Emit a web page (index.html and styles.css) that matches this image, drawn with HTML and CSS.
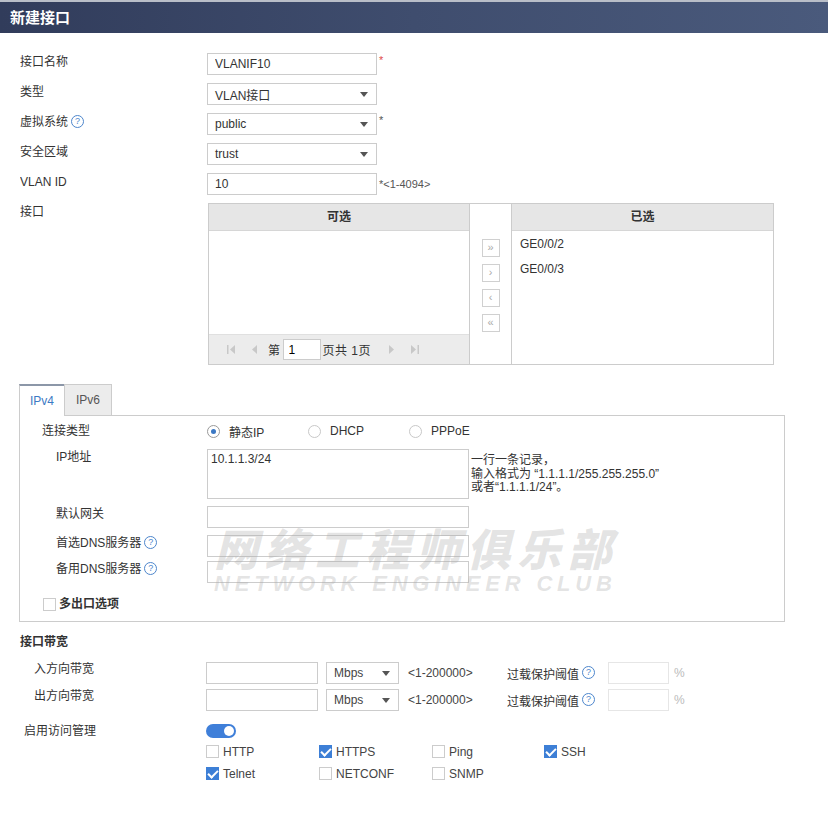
FILE: index.html
```html
<!DOCTYPE html>
<html lang="zh-CN">
<head>
  <meta charset="UTF-8" />
  <title>新建接口</title>
  <link rel="stylesheet" href="styles.css">
</head>
<body>

  <div class="titlebar">新建接口</div>

  <div class="form">
    <div class="row">
      <label class="lbl">接口名称</label>
      <input class="txt w170" type="text" value="VLANIF10" />
      <span class="req red">*</span>
    </div>
    <div class="row">
      <label class="lbl">类型</label>
      <div class="select w170">VLAN接口<span class="arrow"></span></div>
    </div>
    <div class="row">
      <label class="lbl">虚拟系统<span class="help">?</span></label>
      <div class="select w170">public<span class="arrow"></span></div>
      <span class="req">*</span>
    </div>
    <div class="row">
      <label class="lbl">安全区域</label>
      <div class="select w170">trust<span class="arrow"></span></div>
    </div>
    <div class="row">
      <label class="lbl">VLAN ID</label>
      <input class="txt w170" type="text" value="10" />
      <span class="req mid">*&lt;1-4094&gt;</span>
    </div>
    <div class="row">
      <label class="lbl">接口</label>
      <div class="duallist">
        <div class="dl-pane dl-left">
          <div class="dl-head">可选</div>
          <div class="dl-body"></div>
          <div class="pager">
            <svg class="pg-ico" width="9" height="9" viewBox="0 0 9 9"><rect x="0" y="0" width="1.5" height="9" fill="#c8c8c8"/><path d="M8 0 L3 4.5 L8 9 Z" fill="#c8c8c8"/></svg>
            <svg class="pg-ico pg-prev" width="9" height="9" viewBox="0 0 9 9"><path d="M7 0 L2 4.5 L7 9 Z" fill="#c8c8c8"/></svg>
            <span class="pg-txt">第</span>
            <input class="pg-input" type="text" value="1" />
            <span class="pg-txt">页共 1页</span>
            <svg class="pg-ico pg-next" width="9" height="9" viewBox="0 0 9 9"><path d="M2 0 L7 4.5 L2 9 Z" fill="#c8c8c8"/></svg>
            <svg class="pg-ico" width="9" height="9" viewBox="0 0 9 9"><path d="M1 0 L6 4.5 L1 9 Z" fill="#c8c8c8"/><rect x="7.5" y="0" width="1.5" height="9" fill="#c8c8c8"/></svg>
          </div>
        </div>
        <div class="dl-mid">
          <span class="mv-btn">&raquo;</span>
          <span class="mv-btn">&rsaquo;</span>
          <span class="mv-btn">&lsaquo;</span>
          <span class="mv-btn">&laquo;</span>
        </div>
        <div class="dl-pane dl-right">
          <div class="dl-head">已选</div>
          <div class="dl-item">GE0/0/2</div>
          <div class="dl-item">GE0/0/3</div>
        </div>
      </div>
    </div>

    <div class="tabs">
      <span class="tab active">IPv4</span>
      <span class="tab">IPv6</span>
    </div>
    <div class="tab-panel">
      <div class="prow radios">
        <label class="lbl">连接类型</label>
        <span class="radio-opt"><span class="radio on"></span>静态IP</span>
        <span class="radio-opt"><span class="radio"></span>DHCP</span>
        <span class="radio-opt"><span class="radio"></span>PPPoE</span>
      </div>
      <div class="prow">
        <label class="lbl sub">IP地址</label>
        <textarea class="area">10.1.1.3/24</textarea>
        <div class="hint">一行一条记录，<br>输入格式为 “1.1.1.1/255.255.255.0”<br>或者“1.1.1.1/24”。</div>
      </div>
      <div class="prow">
        <label class="lbl sub">默认网关</label>
        <input class="txt w262" type="text" />
      </div>
      <div class="prow tight">
        <label class="lbl sub">首选DNS服务器<span class="help">?</span></label>
        <input class="txt w262" type="text" />
      </div>
      <div class="prow tight">
        <label class="lbl sub">备用DNS服务器<span class="help">?</span></label>
        <input class="txt w262" type="text" />
      </div>
      <div class="multi">
        <span class="cbox"></span><b>多出口选项</b>
      </div>
    </div>

    <div class="section-title">接口带宽</div>
    <div class="bw-row">
      <label class="lbl bw">入方向带宽</label>
      <input class="txt w112" type="text" />
      <div class="select w73">Mbps<span class="arrow"></span></div>
      <span class="range">&lt;1-200000&gt;</span>
      <span class="th-lbl">过载保护阈值<span class="help">?</span></span>
      <input class="txt w61 faint" type="text" />
      <span class="pct">%</span>
    </div>
    <div class="bw-row">
      <label class="lbl bw">出方向带宽</label>
      <input class="txt w112" type="text" />
      <div class="select w73">Mbps<span class="arrow"></span></div>
      <span class="range">&lt;1-200000&gt;</span>
      <span class="th-lbl">过载保护阈值<span class="help">?</span></span>
      <input class="txt w61 faint" type="text" />
      <span class="pct">%</span>
    </div>

    <div class="acc-row">
      <label class="lbl acc">启用访问管理</label>
      <div class="acc-field">
        <span class="toggle"><span class="knob"></span></span>
        <div class="svc-grid">
          <span class="svc"><span class="cbox"></span>HTTP</span>
          <span class="svc"><span class="cbox on"></span>HTTPS</span>
          <span class="svc"><span class="cbox"></span>Ping</span>
          <span class="svc"><span class="cbox on"></span>SSH</span>
          <span class="svc"><span class="cbox on"></span>Telnet</span>
          <span class="svc"><span class="cbox"></span>NETCONF</span>
          <span class="svc"><span class="cbox"></span>SNMP</span>
        </div>
      </div>
    </div>
  </div>

  <div class="watermark">
    <div class="wm-cn">网络工程师俱乐部</div>
    <div class="wm-en">NETWORK ENGINEER CLUB</div>
  </div>

</body>
</html>
```

FILE: styles.css
```css
body {
  margin: 0;
  font-family: "Liberation Sans", "Noto Sans CJK SC", sans-serif;
  font-size: 12px;
  color: #333;
  background: #fff;
  position: relative;
}

.titlebar {
  height: 31px;
  line-height: 32px;
  border-top: 2px solid #b9bec8;
  padding-left: 10px;
  background: linear-gradient(to right, #313c5b, #3f4d6e 50%, #4a5a7c);
  color: #fff;
  font-size: 15px;
  font-weight: bold;
}

.form {
  padding: 20px 0 40px 20px;
}

.row {
  display: flex;
  align-items: flex-start;
  margin-bottom: 8px;
}

.lbl {
  width: 187px;
  height: 22px;
  flex: none;
  box-sizing: border-box;
  line-height: 16px;
  padding-top: 1px;
  overflow: hidden;
}

.help {
  display: inline-block;
  width: 11px;
  height: 11px;
  margin-left: 3px;
  border: 1px solid #4d86cc;
  border-radius: 50%;
  color: #4d86cc;
  font-size: 9px;
  line-height: 11px;
  text-align: center;
  vertical-align: top;
  margin-top: 1px;
}

.txt {
  height: 22px;
  box-sizing: border-box;
  border: 1px solid #ccc;
  padding: 0 7px;
  font-family: inherit;
  font-size: 12px;
  color: #333;
  margin: 0;
  outline: none;
}

.w170 { width: 170px; }
.w262 { width: 262px; }
.w112 { width: 112px; }
.w73 { width: 73px; }
.w61 { width: 61px; }

.faint { border-color: #e6e6e6; }

.select {
  height: 22px;
  box-sizing: border-box;
  border: 1px solid #ccc;
  padding: 0 8px 0 7px;
  display: flex;
  align-items: center;
  justify-content: space-between;
}

.arrow {
  width: 0;
  height: 0;
  border-left: 4px solid transparent;
  border-right: 4px solid transparent;
  border-top: 5px solid #555;
}

.req {
  margin-left: 2px;
  line-height: 14px;
  color: #555;
  font-size: 11px;
}

.req.red { color: #e04a4a; }
.req.mid { line-height: 22px; }

/* dual list */
.duallist {
  width: 566px;
  height: 162px;
  box-sizing: border-box;
  border: 1px solid #ccc;
  display: flex;
  margin-left: 1px;
}

.dl-pane {
  display: flex;
  flex-direction: column;
}

.dl-left {
  width: 261px;
  border-right: 1px solid #ccc;
  box-sizing: border-box;
}

.dl-right {
  flex: 1;
  border-left: 1px solid #ccc;
}

.dl-head {
  height: 26px;
  line-height: 27px;
  background: #e6e6e6;
  border-bottom: 1px solid #d6d6d6;
  text-align: center;
  font-weight: bold;
  flex: none;
}

.dl-body { flex: 1; }

.dl-item {
  height: 25px;
  line-height: 26px;
  padding-left: 8px;
}

.pager {
  height: 29px;
  background: #ececec;
  border-top: 1px solid #e0e0e0;
  display: flex;
  align-items: center;
  padding-left: 18px;
}

.pg-ico { margin-right: 14px; }
.pg-prev { margin-right: 9px; }
.pg-next { margin-left: 15px; }

.pg-txt { margin-right: 1px; letter-spacing: 0.5px; }

.pg-input {
  width: 38px;
  height: 21px;
  box-sizing: border-box;
  border: 1px solid #ccc;
  padding: 0 5px;
  font-family: inherit;
  font-size: 12px;
  margin: 0 2px 0 1px;
}

.dl-mid {
  width: 41px;
  display: flex;
  flex-direction: column;
  align-items: center;
  padding-top: 35px;
  gap: 7px;
}

.mv-btn {
  width: 18px;
  height: 18px;
  box-sizing: border-box;
  border: 1px solid #d0d0d0;
  color: #aaa;
  font-size: 11px;
  line-height: 15px;
  text-align: center;
}

/* tabs */
.tabs {
  display: flex;
  margin: 19px 0 0 -1px;
}

.tab {
  height: 31px;
  box-sizing: border-box;
  padding: 0 11px;
  line-height: 30px;
  border: 1px solid #ccc;
  border-bottom: none;
  background: #ececec;
  color: #555;
}

.tab.active {
  padding: 0 10px;
  background: #fff;
  color: #3b7ac4;
  border-top: 2px solid #8c97a8;
  border-right: none;
  margin-bottom: -1px;
  height: 32px;
  position: relative;
}

.tab-panel {
  width: 766px;
  margin-left: -1px;
  box-sizing: border-box;
  border: 1px solid #ccc;
  padding: 6px 0 10px 0;
}

.prow {
  display: flex;
  align-items: flex-start;
  margin-bottom: 7px;
}

.prow.tight { margin-bottom: 4px; }

.prow .lbl { padding-left: 22px; }
.prow .lbl.sub { padding-left: 36px; padding-top: 0; }

.radios {
  height: 18px;
  align-items: center;
  margin-bottom: 9px;
}

.radios .lbl { height: 18px; }

.radio-opt {
  width: 101px;
  display: flex;
  align-items: center;
}

.radio {
  width: 13px;
  height: 13px;
  box-sizing: border-box;
  border: 1px solid #c8c8c8;
  border-radius: 50%;
  margin-right: 9px;
  position: relative;
}

.radio.on { border-color: #999; }

.radio.on::after {
  content: "";
  position: absolute;
  left: 3px;
  top: 3px;
  width: 5px;
  height: 5px;
  border-radius: 50%;
  background: #3b78c4;
}

.area {
  width: 262px;
  height: 50px;
  box-sizing: border-box;
  border: 1px solid #ccc;
  padding: 2px 3px;
  font-family: inherit;
  font-size: 12px;
  color: #333;
  resize: none;
  margin: 0;
}

.hint {
  margin-left: 2px;
  padding-top: 5px;
  line-height: 13.5px;
}

.multi {
  display: flex;
  align-items: center;
  height: 14px;
  line-height: 14px;
  margin: 14px 0 0 23px;
}

.multi b { margin-left: 3px; }

.cbox {
  width: 13px;
  height: 13px;
  box-sizing: border-box;
  border: 1px solid #ccc;
  background: #fff;
  display: inline-block;
  position: relative;
  flex: none;
}

.cbox.on {
  background: #3d7fd6;
  border-color: #3d7fd6;
}

.cbox.on::after {
  content: "";
  position: absolute;
  left: 3px;
  top: 0px;
  width: 4px;
  height: 8px;
  border: solid #fff;
  border-width: 0 2px 2px 0;
  transform: rotate(45deg);
}

/* bandwidth */
.section-title {
  margin-top: 12px;
  line-height: 16px;
  font-weight: bold;
  margin-bottom: 12px;
}

.bw-row {
  display: flex;
  align-items: center;
  margin-bottom: 5px;
}

.lbl.bw {
  width: 186px;
  padding: 0 0 0 14px;
  line-height: 14px;
  align-self: flex-start;
}

.bw-row .select { margin-left: 8px; color: #444; }

.range {
  width: 99px;
  margin-left: 9px;
  color: #444;
}

.th-lbl { width: 101px; }

.pct {
  margin-left: 5px;
  color: #bbb;
}

/* access */
.acc-row {
  display: flex;
  margin-top: 12px;
}

.lbl.acc {
  width: 186px;
  padding: 0 0 0 4px;
}

.acc-field { padding-top: 1px; }

.toggle {
  display: block;
  width: 30px;
  height: 14px;
  border-radius: 7px;
  background: #3f7fd9;
  position: relative;
}

.knob {
  position: absolute;
  right: 2px;
  top: 2px;
  width: 10px;
  height: 10px;
  border-radius: 50%;
  background: #fff;
}

.svc-grid {
  display: grid;
  grid-template-columns: 113px 113px 112px 80px;
  row-gap: 9px;
  margin-top: 7px;
}

.svc {
  display: flex;
  align-items: center;
  height: 13px;
  color: #444;
}

.svc .cbox { margin-right: 4px; }

/* watermark over the form */
.watermark {
  position: absolute;
  left: 214px;
  top: 522px;
  pointer-events: none;
  color: rgba(170, 170, 170, 0.33);
  font-style: italic;
  font-weight: bold;
}

.wm-cn {
  font-family: "Noto Sans CJK SC", sans-serif;
  font-size: 44px;
  letter-spacing: 6.5px;
  line-height: 50px;
  font-weight: 900;
}

.wm-en {
  font-family: "Liberation Sans", sans-serif;
  font-size: 22px;
  letter-spacing: 4.8px;
  line-height: 24px;
}
```
